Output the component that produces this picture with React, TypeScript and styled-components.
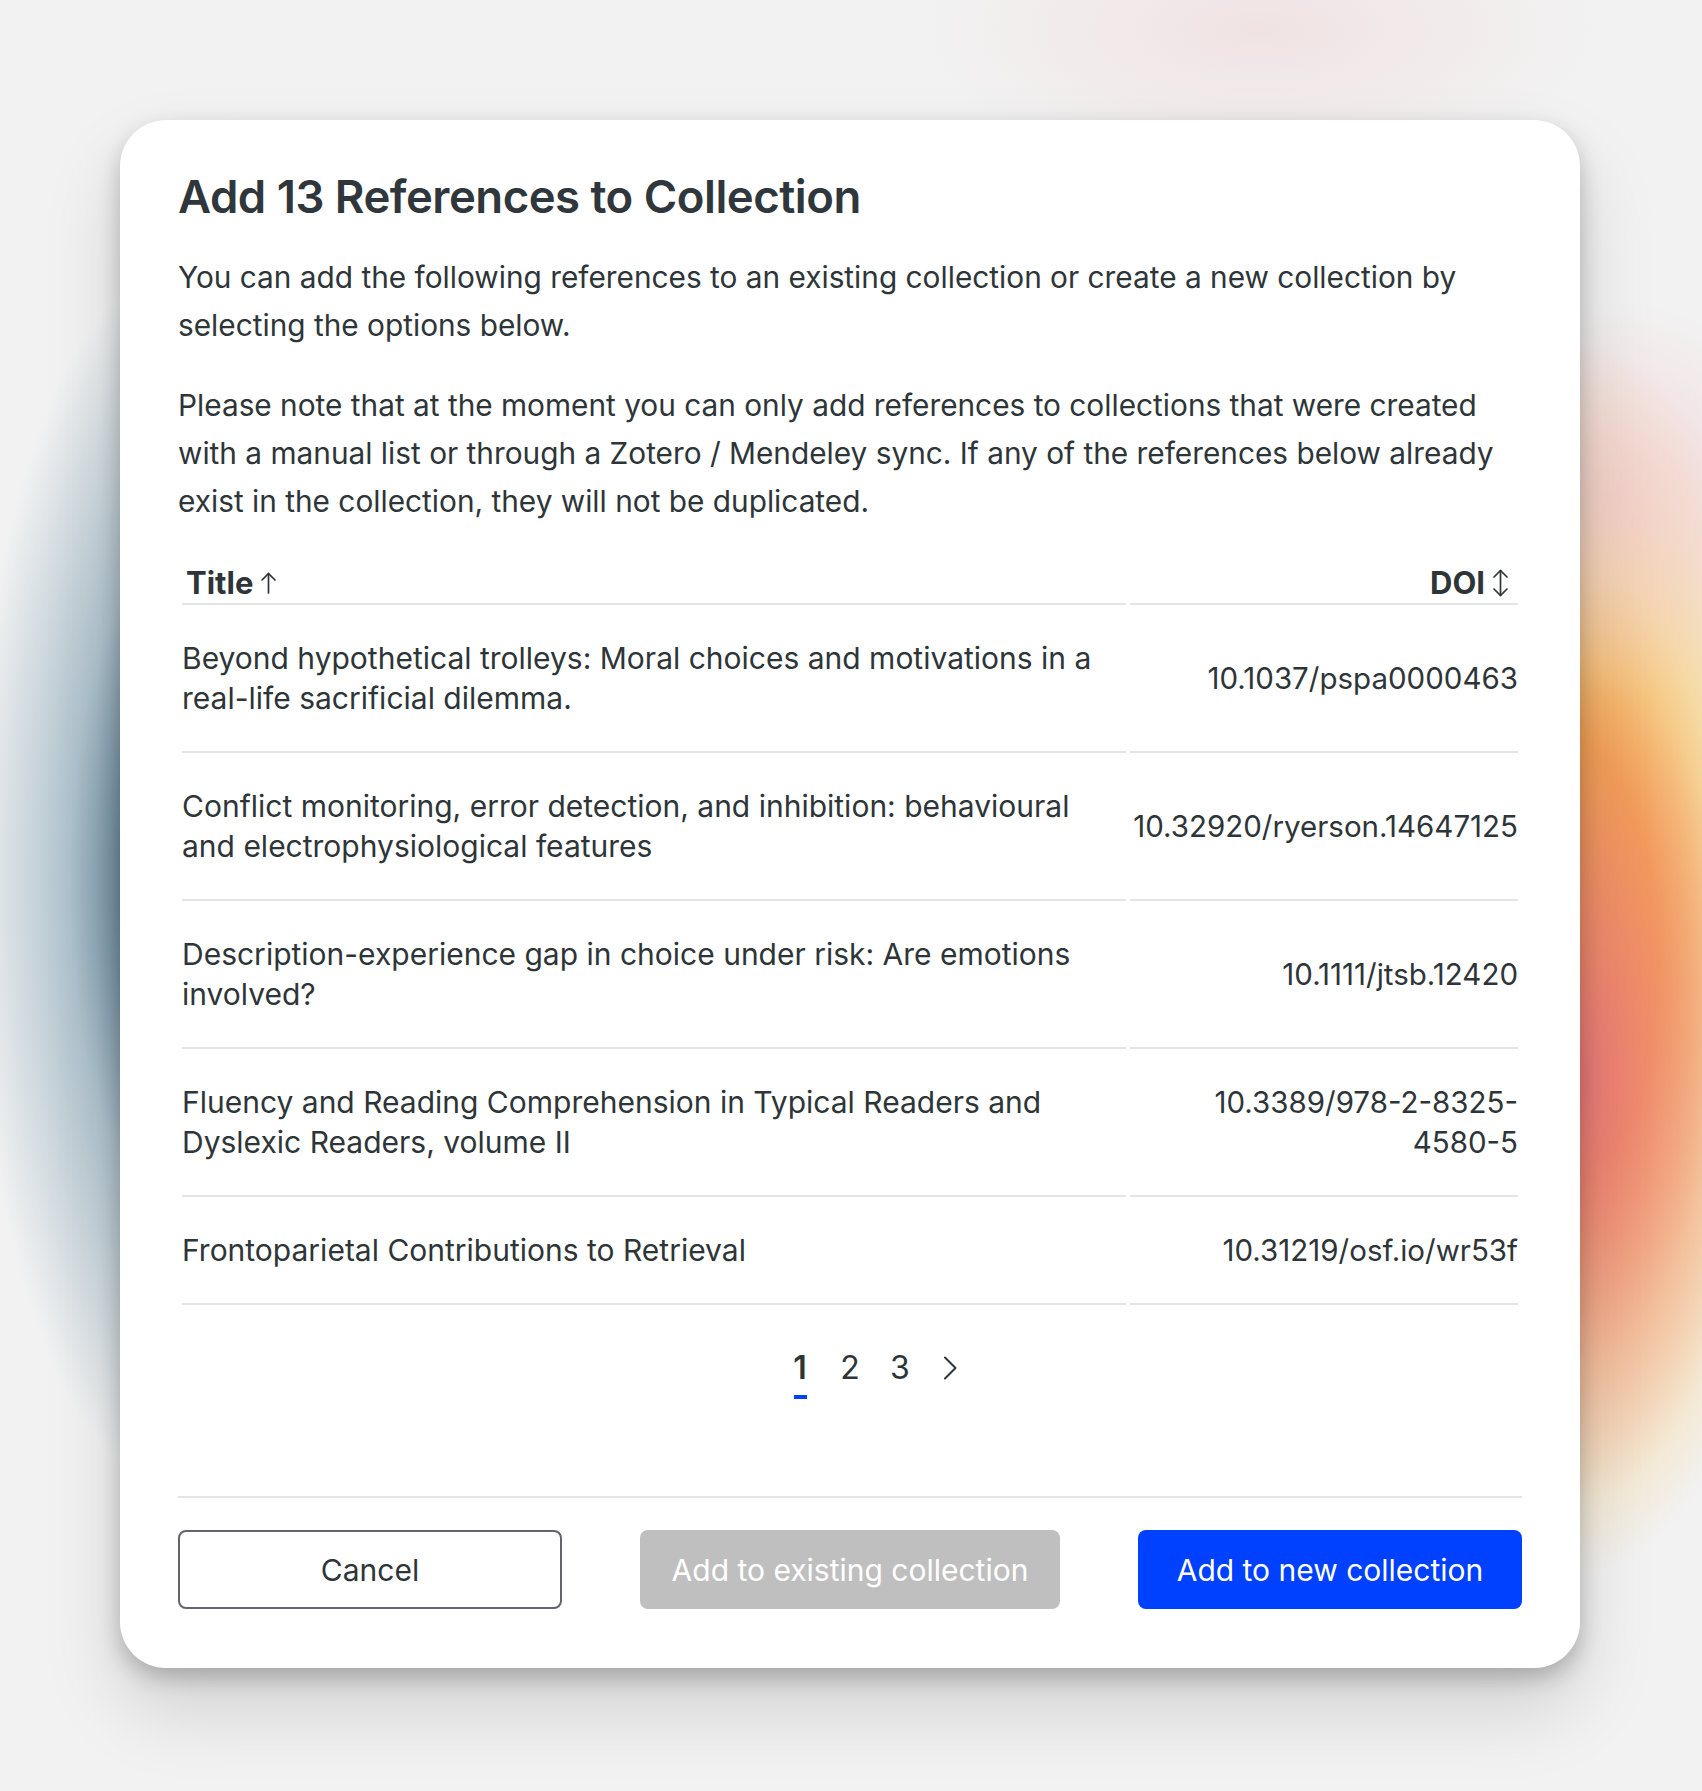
import React from "react";
import styled, { createGlobalStyle } from "styled-components";

type Reference = {
  title: string;
  doi: string;
};

const references: Reference[] = [
  {
    title:
      "Beyond hypothetical trolleys: Moral choices and motivations in a real-life sacrificial dilemma.",
    doi: "10.1037/pspa0000463",
  },
  {
    title:
      "Conflict monitoring, error detection, and inhibition: behavioural and electrophysiological features",
    doi: "10.32920/ryerson.14647125",
  },
  {
    title:
      "Description-experience gap in choice under risk: Are emotions involved?",
    doi: "10.1111/jtsb.12420",
  },
  {
    title:
      "Fluency and Reading Comprehension in Typical Readers and Dyslexic Readers, volume II",
    doi: "10.3389/978-2-8325-4580-5",
  },
  {
    title: "Frontoparietal Contributions to Retrieval",
    doi: "10.31219/osf.io/wr53f",
  },
];

const GlobalStyle = createGlobalStyle`
  html, body {
    margin: 0;
    padding: 0;
  }
  body {
    font-family: Inter, "Noto Sans", sans-serif;
    color: #2e3539;
    background: #f2f2f2;
  }
  * {
    box-sizing: border-box;
  }
`;

const Page = styled.div`
  min-height: 1791px;
  padding-top: 120px;
  background:
    radial-gradient(ellipse 340px 140px at 1260px 30px, rgba(240, 214, 216, 0.55), rgba(242, 242, 242, 0) 100%),
    radial-gradient(ellipse 200px 200px at 1610px 500px, rgba(242, 200, 205, 0.7), rgba(242, 200, 205, 0) 100%),
    radial-gradient(ellipse 170px 420px at 1580px 1080px, rgba(234, 112, 132, 0.85), rgba(236, 130, 140, 0) 100%),
    radial-gradient(ellipse 250px 620px at 1570px 960px, rgba(246, 166, 70, 0.95) 35%, rgba(249, 198, 100, 0.55) 65%, rgba(242, 242, 242, 0) 100%),
    radial-gradient(ellipse 220px 620px at 190px 880px, rgba(72, 110, 132, 0.95) 20%, rgba(120, 155, 175, 0.55) 55%, rgba(242, 242, 242, 0) 100%),
    #f2f2f2;
`;

const Modal = styled.section`
  width: 1460px;
  margin-left: 120px;
  background: #ffffff;
  border-radius: 46px;
  padding: 51px 58px 59px;
  box-shadow: 0 10px 22px rgba(0, 0, 0, 0.22), 0 40px 80px rgba(0, 0, 0, 0.14);
`;

const Heading = styled.h2`
  margin: 0;
  font-size: 45.5px;
  line-height: 52px;
  font-weight: 600;
  letter-spacing: -0.5px;
  color: #2f373c;
`;

const Text = styled.p<{ $gap: number }>`
  margin: ${({ $gap }) => $gap}px 0 0;
  font-size: 29.8px;
  line-height: 48px;
  color: #2e3539;
`;

const Table = styled.table`
  width: 100%;
  margin-top: 38px;
  border-collapse: separate;
  border-spacing: 4px 0;
`;

const HeadCell = styled.th<{ $align: "left" | "right"; $width?: number }>`
  padding: 0;
  width: ${({ $width }) => ($width ? `${$width}px` : "auto")};
  text-align: ${({ $align }) => $align};
  font-size: 31px;
  line-height: 40px;
  font-weight: 700;
  color: #2e3539;
  border-bottom: 2px solid #e4e4e4;
`;

const SortLabel = styled.span<{ $inset: "left" | "right" }>`
  display: inline-flex;
  align-items: center;
  gap: 7px;
  padding-left: ${({ $inset }) => ($inset === "left" ? "4px" : "0")};
  padding-right: ${({ $inset }) => ($inset === "right" ? "9px" : "0")};
`;

const Cell = styled.td<{ $align: "left" | "right" }>`
  padding: 33px 0;
  text-align: ${({ $align }) => $align};
  vertical-align: middle;
  font-size: ${({ $align }) => ($align === "right" ? "29.5px" : "30px")};
  line-height: 40px;
  color: #2e3539;
  border-bottom: 2px solid #e4e4e4;
`;

const Pager = styled.nav`
  display: flex;
  justify-content: center;
  gap: 18px;
  margin-top: 43px;
`;

const PageItem = styled.span<{ $active?: boolean; $hidden?: boolean }>`
  display: flex;
  flex-direction: column;
  align-items: center;
  min-width: 32px;
  font-size: 32px;
  line-height: 40px;
  font-weight: ${({ $active }) => ($active ? 600 : 400)};
  color: #2e3539;
  visibility: ${({ $hidden }) => ($hidden ? "hidden" : "visible")};
  cursor: pointer;

  &::after {
    content: "";
    width: 13px;
    height: 4px;
    margin-top: 7px;
    background: ${({ $active }) => ($active ? "#0040ff" : "transparent")};
  }
`;

const ChevronBox = styled.span`
  height: 40px;
  display: flex;
  align-items: center;
`;

const Footer = styled.footer`
  margin-top: 97px;
  padding-top: 32px;
  border-top: 2px solid #e4e4e4;
  display: flex;
  justify-content: space-between;
`;

const Button = styled.button<{ $variant: "outline" | "disabled" | "primary" }>`
  height: 79px;
  min-width: 384px;
  padding: 0 32px;
  border-radius: 8px;
  font-family: Inter, "Noto Sans", sans-serif;
  font-size: 30px;
  font-weight: 400;
  cursor: ${({ $variant }) => ($variant === "disabled" ? "default" : "pointer")};
  border: ${({ $variant }) =>
    $variant === "outline" ? "2px solid #63646c" : "none"};
  background: ${({ $variant }) =>
    $variant === "primary"
      ? "#0040ff"
      : $variant === "disabled"
      ? "#bfbfbf"
      : "#ffffff"};
  color: ${({ $variant }) => ($variant === "outline" ? "#2e3539" : "#ffffff")};
`;

const ArrowUp = () => (
  <svg width="17" height="22" viewBox="0 0 17 22" fill="none" stroke="#2e3539" strokeWidth="1.7" strokeLinecap="round" strokeLinejoin="round">
    <line x1="8.5" y1="1.5" x2="8.5" y2="21" />
    <polyline points="2,8 8.5,1.5 15,8" />
  </svg>
);

const ArrowUpDown = () => (
  <svg width="17" height="28" viewBox="0 0 17 28" fill="none" stroke="#2e3539" strokeWidth="1.7" strokeLinecap="round" strokeLinejoin="round">
    <line x1="8.5" y1="1.5" x2="8.5" y2="26.5" />
    <polyline points="2,8 8.5,1.5 15,8" />
    <polyline points="2,20 8.5,26.5 15,20" />
  </svg>
);

const Chevron = ({ dir }: { dir: "left" | "right" }) => (
  <svg width="14" height="24" viewBox="0 0 14 24" fill="none" stroke="#2e3539" strokeWidth="2" strokeLinecap="round" strokeLinejoin="round">
    {dir === "right" ? <polyline points="2,1.5 12.5,12 2,22.5" /> : <polyline points="12,1.5 1.5,12 12,22.5" />}
  </svg>
);

const App: React.FC = () => {
  return (
    <Page>
      <GlobalStyle />
      <Modal>
        <Heading>Add 13 References to Collection</Heading>
        <Text $gap={30}>
          You can add the following references to an existing collection or
          create a new collection by selecting the options below.
        </Text>
        <Text $gap={32}>
          Please note that at the moment you can only add references to
          collections that were created with a manual list or through a Zotero
          / Mendeley sync. If any of the references below already exist in the
          collection, they will not be duplicated.
        </Text>

        <Table>
          <thead>
            <tr>
              <HeadCell $align="left">
                <SortLabel $inset="left">
                  Title <ArrowUp />
                </SortLabel>
              </HeadCell>
              <HeadCell $align="right" $width={388}>
                <SortLabel $inset="right">
                  DOI <ArrowUpDown />
                </SortLabel>
              </HeadCell>
            </tr>
          </thead>
          <tbody>
            {references.map((ref) => (
              <tr key={ref.doi}>
                <Cell $align="left">{ref.title}</Cell>
                <Cell $align="right">{ref.doi}</Cell>
              </tr>
            ))}
          </tbody>
        </Table>

        <Pager>
          <PageItem $hidden>
            <ChevronBox>
              <Chevron dir="left" />
            </ChevronBox>
          </PageItem>
          <PageItem $active>1</PageItem>
          <PageItem>2</PageItem>
          <PageItem>3</PageItem>
          <PageItem>
            <ChevronBox>
              <Chevron dir="right" />
            </ChevronBox>
          </PageItem>
        </Pager>

        <Footer>
          <Button $variant="outline">Cancel</Button>
          <Button $variant="disabled" disabled>
            Add to existing collection
          </Button>
          <Button $variant="primary">Add to new collection</Button>
        </Footer>
      </Modal>
    </Page>
  );
};

export default App;
